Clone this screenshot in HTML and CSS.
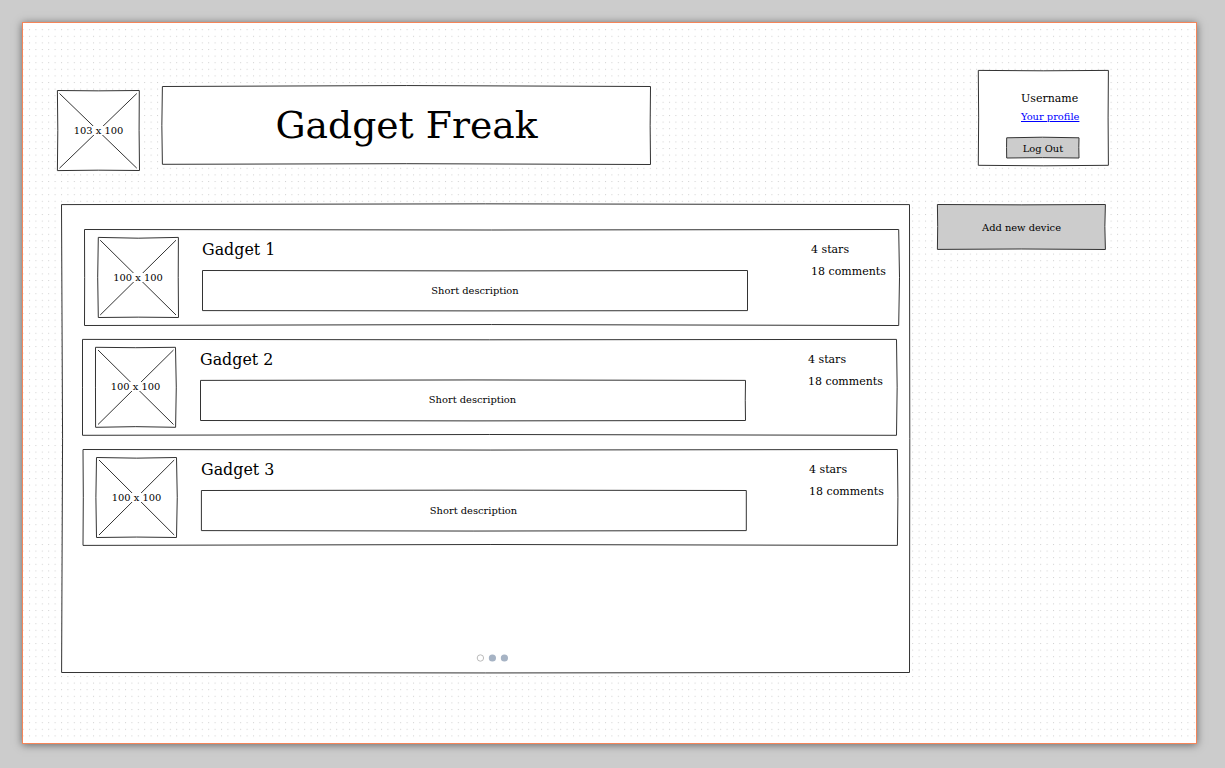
FILE: index.html
```html
<!DOCTYPE html>
<html lang="en">
<head>
<meta charset="utf-8">
<title>Gadget Freak</title>
<link rel="stylesheet" href="styles.css">
</head>
<body>
<main class="board">
  <svg class="grid" aria-hidden="true">
    <defs>
      <pattern id="dots" x="6" y="6.2" width="6.4" height="6.6" patternUnits="userSpaceOnUse">
        <rect width="1" height="1" fill="#d0d0d0"/>
      </pattern>
    </defs>
    <rect x="0" y="5" width="1173" height="710" fill="url(#dots)"/>
  </svg>

  <header class="header">
    <div class="box logo">
      <svg class="frame" aria-hidden="true"><path class="fill" d="M.4 .5Q41 1.2 82.3 .5Q81.8 40 82.5 80.5Q41 79.8 .4 80.6Q1.2 40 .4 .5Z"/><path d="M2.5 3.5L79.8 78.2M79.8 3.5L2.5 78.2"/></svg>
      <span class="size">103 x 100</span>
    </div>
    <div class="box title">
      <svg class="frame" aria-hidden="true"><path class="fill" d="M.4 .5Q244-1.4 488.5 .5Q487.8 40 488.5 78.5Q244 77 .4 78.3Q-.7 40 .4 .5Z"/></svg>
      <h1>Gadget Freak</h1>
    </div>
    <div class="box user">
      <svg class="frame" aria-hidden="true"><path class="fill" d="M.3 .4Q65 1.2 130.4 .4Q129.8 48 130.4 95.3Q65 96.3 .3 95.3Q1 48 .3 .4Z"/></svg>
      <p class="name">Username</p>
      <a class="profile" href="#">Your profile</a>
      <div class="box logout">
        <svg class="frame" aria-hidden="true"><path class="fill gray" d="M.7 .8Q36-.4 73 .8Q72.6 10 73 21Q36 20.3 .7 21Q.4 10 .7 .8Z"/></svg>
        <span>Log Out</span>
      </div>
    </div>
  </header>

  <div class="content">
    <section class="box list">
      <svg class="frame" aria-hidden="true"><path class="fill" d="M.5 .6Q424-.9 848.5 .6Q849.1 234 848.5 468.5Q424 469.4 .6 468.5Q2.6 234 .5 .6Z"/></svg>

      <article class="box row first">
        <svg class="frame" aria-hidden="true"><path class="fill" d="M.5 .5Q407 1.5 814.7 .5Q816.3 48 814.7 96.5Q407 94.6 .5 96.5Q.8 48 .5 .5Z"/></svg>
        <div class="box thumb">
          <svg class="frame" aria-hidden="true"><path class="fill" d="M1.3 .4Q41 2 81.4 .4Q81 40 81.5 80.5Q41 79.8 1.3 80.5Q.1 40 1.3 .4Z"/><path d="M3.2 3.2L79 78M79 3.2L3.2 78"/></svg>
          <span class="size">100 x 100</span>
        </div>
        <div class="info">
          <h2>Gadget 1</h2>
          <div class="box desc">
            <svg class="frame" aria-hidden="true"><path class="fill" d="M.5 .5Q273 1.3 545.5 .5V40.6Q273 41.2 .5 40.6Z"/></svg>
            <span>Short description</span>
          </div>
        </div>
        <div class="stats"><p>4 stars</p><p>18 comments</p></div>
      </article>

      <article class="box row second">
        <svg class="frame" aria-hidden="true"><path class="fill" d="M.5 .4Q407 1.2 814.5 .4Q815.8 48 814.5 96.3Q407 94.7 .5 96.3Q.5 48 .5 .4Z"/></svg>
        <div class="box thumb">
          <svg class="frame" aria-hidden="true"><path class="fill" d="M.5 .3Q41 1.1 80.5 .3Q82 40 80.6 80.3Q41 79 .6 80.3Q.4 40 .5 .3Z"/><path d="M3 3L78.5 77.5M78.5 3L3 77.5"/></svg>
          <span class="size">100 x 100</span>
        </div>
        <div class="info">
          <h2>Gadget 2</h2>
          <div class="box desc">
            <svg class="frame" aria-hidden="true"><path class="fill" d="M.5 .4Q273-.5 545.5 .4Q545 20 545.5 40.5Q273 41.3 .5 40.5Z"/></svg>
            <span>Short description</span>
          </div>
        </div>
        <div class="stats"><p>4 stars</p><p>18 comments</p></div>
      </article>

      <article class="box row third">
        <svg class="frame" aria-hidden="true"><path class="fill" d="M0 .5Q407 1.6 814.4 .5Q815.4 48 814.4 96.4Q407 94.6 0 96.4Q.6 48 0 .5Z"/></svg>
        <div class="box thumb">
          <svg class="frame" aria-hidden="true"><path class="fill" d="M.5 .5Q41 1.8 80.5 .5Q82 40 80.5 80.5Q41 79.6 .5 80.5Q-.7 40 .5 .5Z"/><path d="M3 3L78.2 78M78.2 3L3 78"/></svg>
          <span class="size">100 x 100</span>
        </div>
        <div class="info">
          <h2>Gadget 3</h2>
          <div class="box desc">
            <svg class="frame" aria-hidden="true"><path class="fill" d="M.4 .5Q273-.2 545.3 .5V40.6Q273 41.5 .4 40.6Z"/></svg>
            <span>Short description</span>
          </div>
        </div>
        <div class="stats"><p>4 stars</p><p>18 comments</p></div>
      </article>

      <svg class="pager" viewBox="0 0 34 10" aria-label="Page 1 of 3">
        <circle cx="5.4" cy="5" r="3.2" fill="#fff" stroke="#bbb"/>
        <circle cx="17.4" cy="5" r="3.6" fill="#a6b3c4"/>
        <circle cx="29.4" cy="5" r="3.6" fill="#a6b3c4"/>
      </svg>
    </section>

    <div class="box add">
      <svg class="frame" aria-hidden="true"><path class="fill gray" d="M.4 .5Q84 1.2 168.4 .5Q167.3 22 168.4 45.5Q84 44.5 .4 45.4Q1 22 .4 .5Z"/></svg>
      <span>Add new device</span>
    </div>
  </div>
</main>
</body>
</html>
```
FILE: styles.css
```css
* {
  box-sizing: border-box;
}

body {
  margin: 0;
  padding: 22px;
  height: 768px;
  overflow: hidden;
  background: #ccc;
  color: #000;
  font: 9.9px/12px "DejaVu Serif", serif;
}

h1, h2, p {
  margin: 0;
  font-weight: 400;
}

.board {
  position: relative;
  width: 1175px;
  height: 722px;
  padding: 47px 0 0 34px;
  border: 1px solid #f58559;
  background: #fff;
  box-shadow: 0 1px 8px rgba(0, 0, 0, .5);
}

/* dotted canvas behind everything */
.grid {
  position: absolute;
  inset: 0;
  width: 100%;
  height: 100%;
}

.box {
  position: relative;
  flex: none;
}

/* hand-drawn outline of a box */
.frame {
  position: absolute;
  inset: 0;
  width: 100%;
  height: 100%;
  overflow: visible;
  fill: none;
  stroke: #333;
  stroke-width: 1;
}

.frame .fill { fill: #fff; }
.frame .gray { fill: #ccc; }

.box > :not(.frame) {
  position: relative;
}

.header {
  display: flex;
  align-items: flex-start;
  height: 134px;
}

.logo, .thumb, .title, .desc, .add, .logout {
  display: flex;
  align-items: center;
  justify-content: center;
}

.logo {
  width: 83px;
  height: 81px;
  margin-top: 20px;
}

.size {
  height: 9px;
  line-height: 9px;
  background: #fff;
}

.title {
  width: 489px;
  height: 79px;
  margin: 16px 0 0 22px;
  padding-bottom: 2px;
}

h1 {
  font-size: 37.7px;
  line-height: 46px;
}

.user {
  width: 131px;
  height: 96px;
  margin-left: 327px;
  padding-top: 22px;
}

.name {
  padding-left: 43px;
  font-size: 11px;
  line-height: 14px;
}

.profile {
  display: block;
  margin: 5px 0 0 43px;
  color: #00f;
}

.logout {
  width: 73px;
  height: 21px;
  margin: 14px 0 0 28px;
  padding: 2px 0 0 1px;
}

.content {
  position: relative;
  display: flex;
  align-items: flex-start;
  gap: 27px;
  padding-left: 4px;
}

.list {
  width: 849px;
  height: 469px;
  padding-top: 25px;
}

.row {
  display: flex;
  width: 815px;
  height: 97px;
  margin-bottom: 13px;
}

.first { margin-left: 23px; }
.second { margin-left: 21px; }
.third { margin-left: 22px; }

.thumb {
  width: 82px;
  height: 81px;
  margin: 8px 0 0 13px;
}

.info {
  width: 546px;
  margin-left: 23px;
}

h2 {
  height: 41px;
  padding-top: 10px;
  font-size: 15.85px;
  line-height: 22px;
}

.desc {
  width: 546px;
  height: 41px;
}

.second .thumb,
.second .desc {
  padding: 0 1px 2px 0;
}

.third .thumb,
.third .desc {
  padding-right: 1px;
}

.stats {
  margin-left: 62px;
  padding-top: 10px;
  font-size: 11px;
  line-height: 22px;
}

.first .stats { margin-left: 63px; }

.pager {
  display: block;
  width: 34px;
  height: 10px;
  margin: 107px 0 0 414px;
}

.add {
  width: 169px;
  height: 46px;
  padding-top: 2px;
}
```
